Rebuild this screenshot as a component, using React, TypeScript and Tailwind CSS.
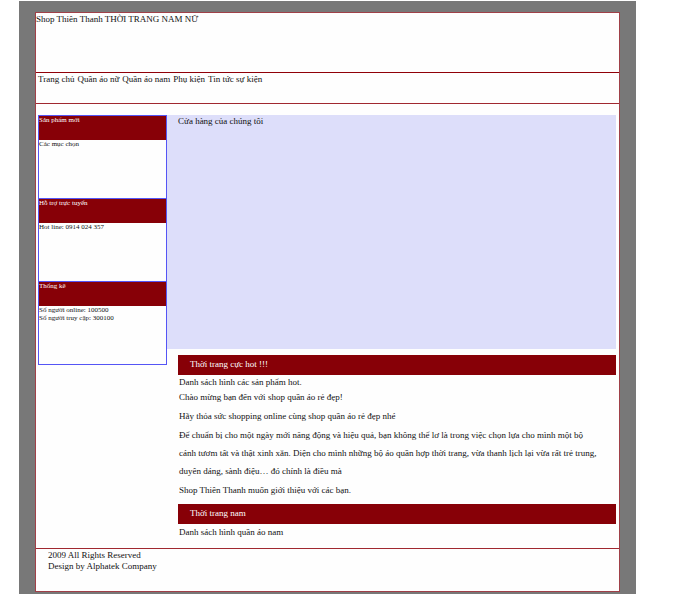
import type { ReactNode } from "react";

const navItems = ["Trang chủ", "Quần áo nữ", "Quần áo nam", "Phụ kiện", "Tin tức sự kiện"];

const paragraphs = [
  "Chào mừng bạn đến với shop quần áo rẻ đẹp!",
  "Hãy thỏa sức shopping online cùng shop quần áo rẻ đẹp nhé",
  "Để chuẩn bị cho một ngày mới năng động và hiệu quả, bạn không thể lơ là trong việc chọn lựa cho mình một bộ\ncánh tươm tất và thật xinh xắn. Diện cho mình những bộ áo quần hợp thời trang, vừa thanh lịch lại vừa rất trẻ trung,\nduyên dáng, sành điệu… đó chính là điều mà",
  "Shop Thiên Thanh muốn giới thiệu với các bạn.",
];

function SideBox({ title, children }: { title: string; children: ReactNode }) {
  return (
    <section className="-mb-px h-[84px] border border-[#5555f5] text-[7px] leading-[8px]">
      <h2 className="h-6 bg-[#870007] text-white">{title}</h2>
      {children}
    </section>
  );
}

function Bar({ children }: { children: ReactNode }) {
  return <h2 className="bg-[#870007] pb-[2px] pl-3 leading-[18px] text-white">{children}</h2>;
}

export default function App() {
  return (
    <div className="bg-white pt-px pb-2 font-['Liberation_Serif',serif] text-[9px] leading-[11px] text-[#111]">
      <div className="mr-[60px] ml-[19px] bg-[#787878] px-4 pt-[11px] pb-[2px]">
        <div className="border border-[#a04048] bg-[#fefefe]">
          <header className="h-[60px] border-b border-[#900008] pt-px">
            <h1>Shop Thiên Thanh THỜI TRANG NAM NỮ</h1>
          </header>
          <nav className="flex h-[31px] gap-[3px] border-b border-[#a02830] pt-px pl-[2px]">
            {navItems.map((item) => (
              <a key={item} href="#">{item}</a>
            ))}
          </nav>
          <div className="flex pt-[11px] pr-[3px] pl-[2px]">
            <aside className="w-[129px] shrink-0">
              <SideBox title="Sản phẩm mới">
                <p>Các mục chọn</p>
              </SideBox>
              <SideBox title="Hỗ trợ trực tuyến">
                <p>Hot line: 0914 024 357</p>
              </SideBox>
              <SideBox title="Thống kê">
                <p>Số người online: 100500</p>
                <p>Số người truy cập: 300100</p>
              </SideBox>
            </aside>
            <main className="min-w-0 flex-1">
              <div className="h-[234px] bg-[#dddefa] pt-px pl-[11px]">
                <p>Cửa hàng của chúng tôi</p>
              </div>
              <div className="pt-[6px] pl-[11px]">
                <Bar>Thời trang cực hot !!!</Bar>
                <p className="pt-[2px] pl-px">Danh sách hình các sản phẩm hot.</p>
                <div className="flex flex-col gap-px pb-[5px] pl-px leading-[18px]">
                  {paragraphs.map((text) => (
                    <p key={text} className="whitespace-pre-line">{text}</p>
                  ))}
                </div>
                <Bar>Thời trang nam</Bar>
                <p className="pt-[3px] pl-px">Danh sách hình quần áo nam</p>
              </div>
            </main>
          </div>
          <footer className="mt-[10px] h-[43px] border-t border-[#a02830] pt-px pl-3">
            <p>2009 All Rights Reserved</p>
            <p>Design by Alphatek Company</p>
          </footer>
        </div>
      </div>
    </div>
  );
}
